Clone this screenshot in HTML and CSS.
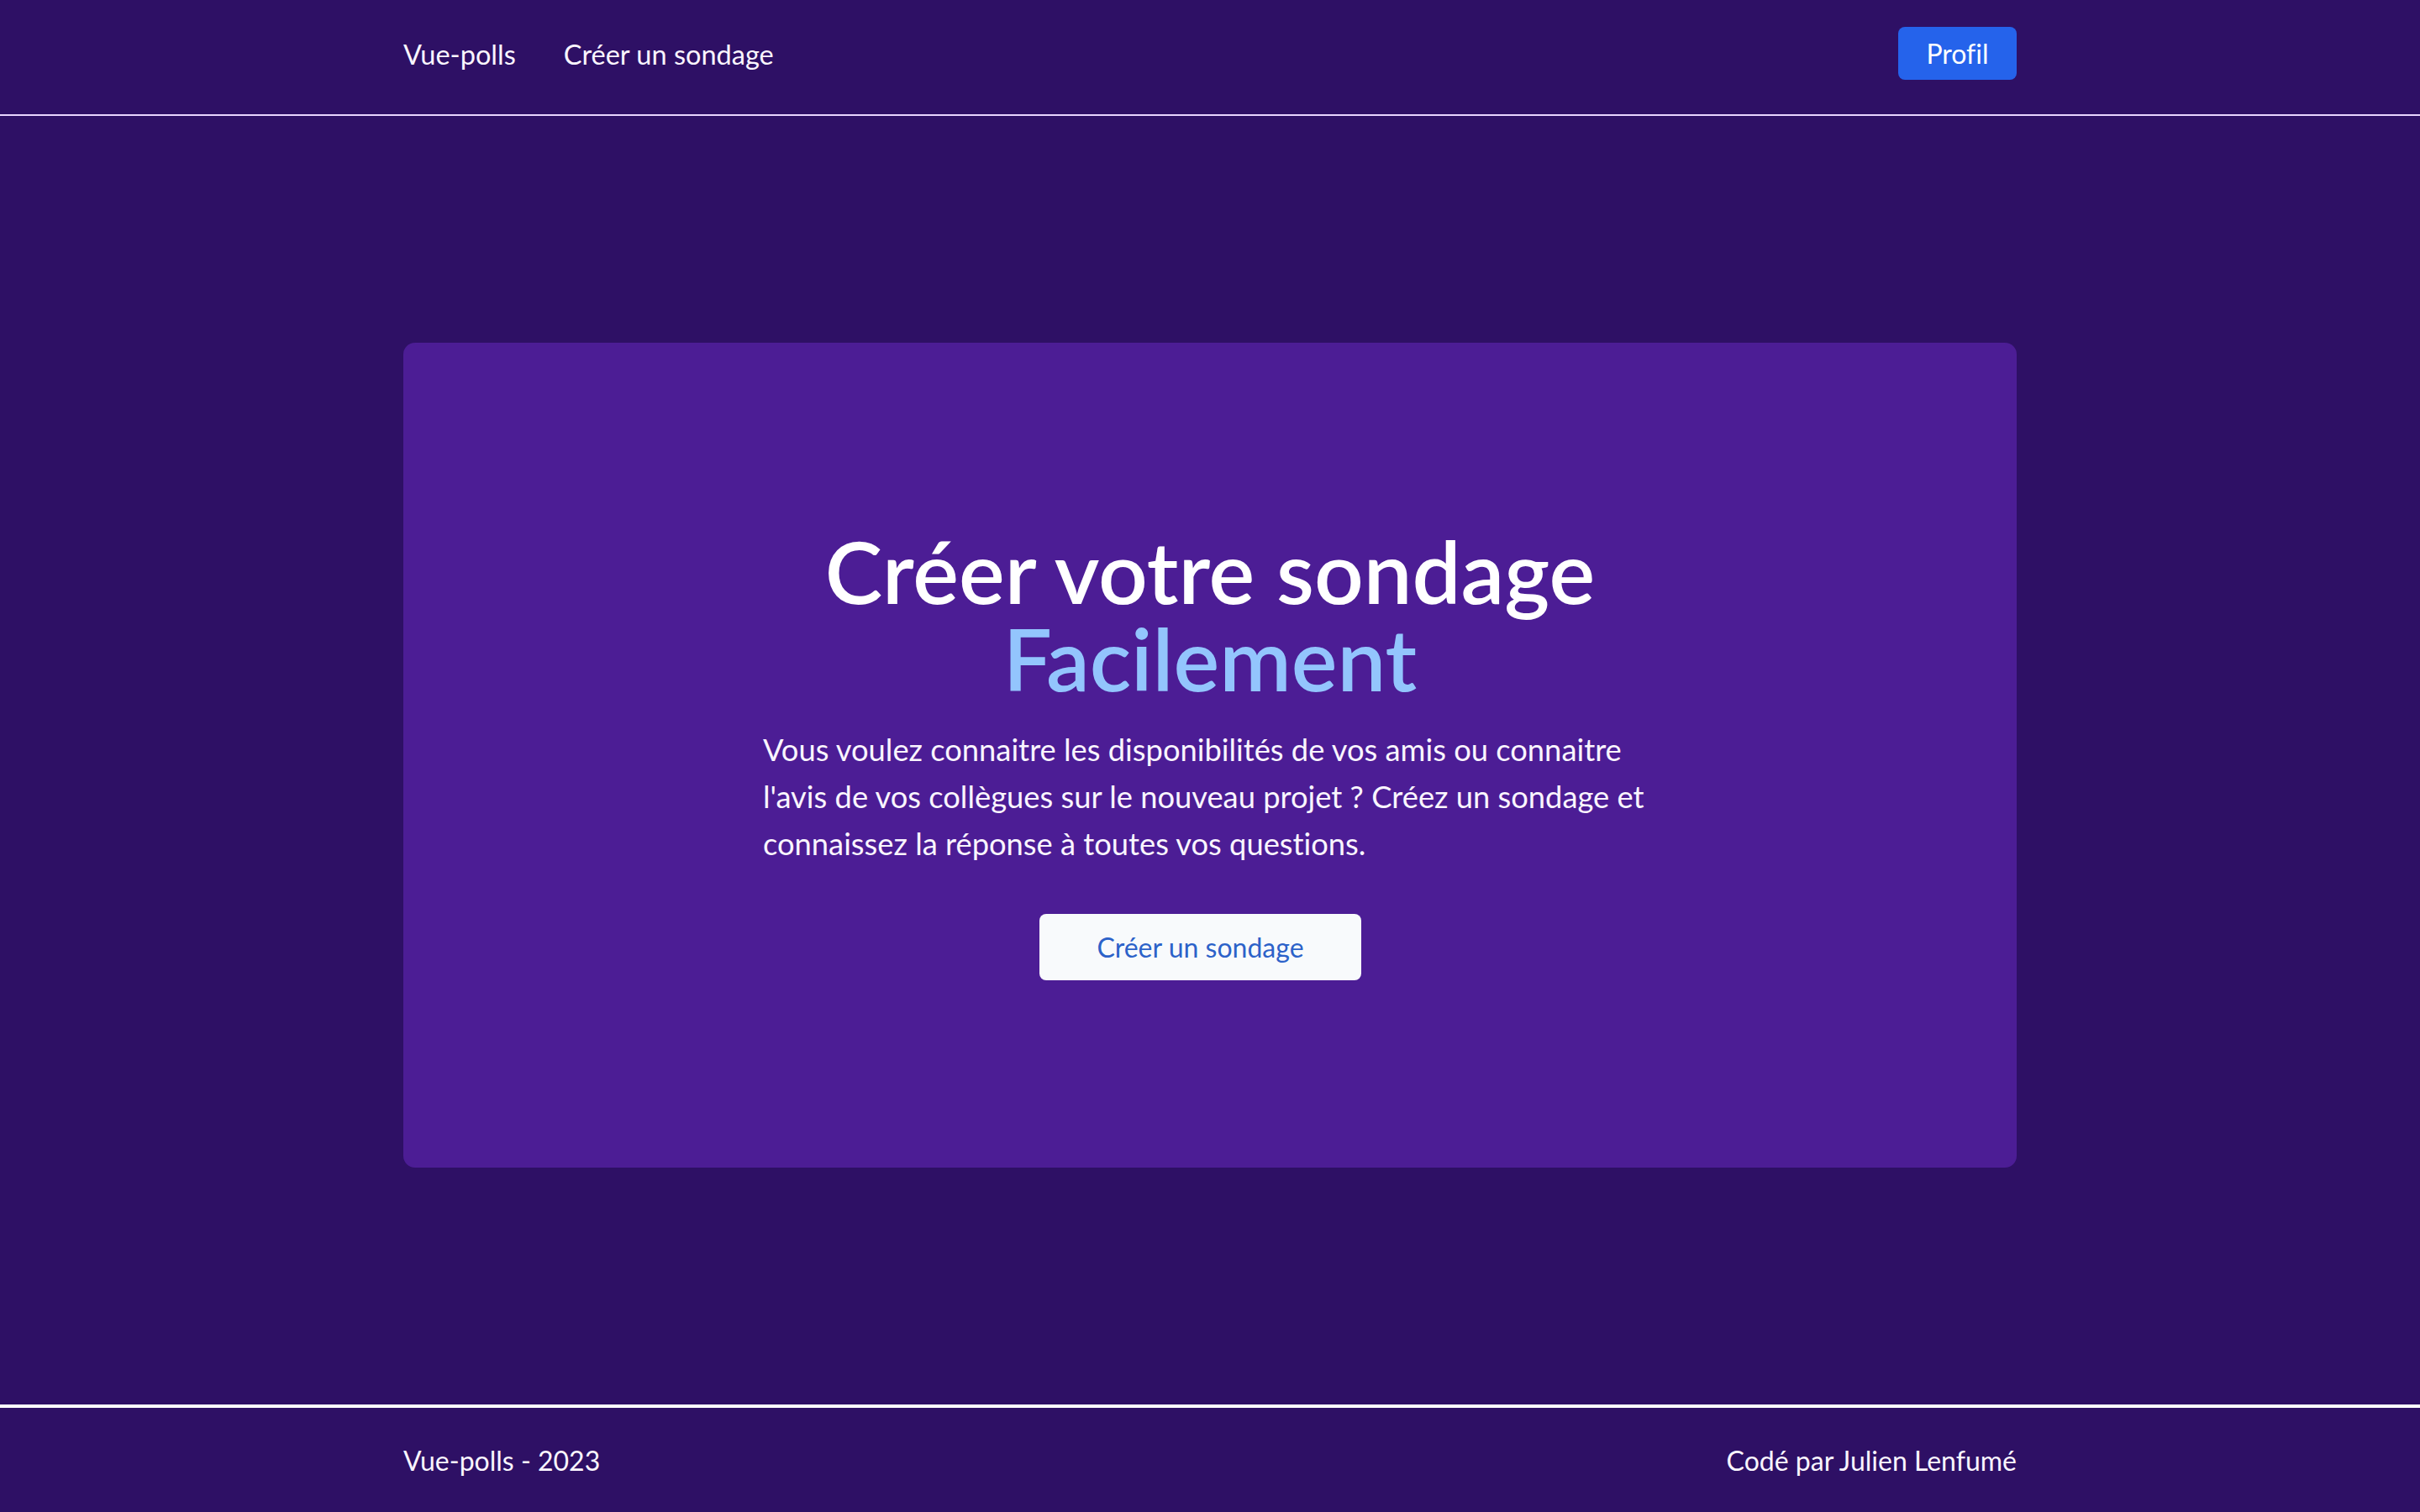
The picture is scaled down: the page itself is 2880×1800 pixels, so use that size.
FILE: index.html
```html
<!DOCTYPE html>
<html lang="fr">
<head>
<meta charset="utf-8">
<title>Vue-polls</title>
<link rel="stylesheet" href="styles.css">
</head>
<body>
<header class="site-header">
  <div class="container header-inner">
    <nav class="nav">
      <a class="nav-link" href="#">Vue-polls</a>
      <a class="nav-link" href="#">Créer un sondage</a>
    </nav>
    <a class="btn-profil" href="#">Profil</a>
  </div>
</header>
<main class="main">
  <div class="container">
    <section class="hero">
      <h1 class="hero-title">Créer votre sondage<br><span class="hero-accent">Facilement</span></h1>
      <p class="hero-text">Vous voulez connaitre les disponibilités de vos amis ou connaitre l'avis de vos collègues sur le nouveau projet ? Créez un sondage et connaissez la réponse à toutes vos questions.</p>
      <a class="btn-cta" href="#">Créer un sondage</a>
    </section>
  </div>
</main>
<footer class="site-footer">
  <div class="container footer-inner">
    <span>Vue-polls - 2023</span>
    <span>Codé par Julien Lenfumé</span>
  </div>
</footer>
</body>
</html>
```
FILE: styles.css
```css
* { box-sizing: border-box; }
html, body { margin: 0; padding: 0; }
body {
  min-height: 100vh;
  display: flex;
  flex-direction: column;
  background: #2e1065;
  color: #faf5ff;
  font-family: "Lato", "Open Sans", sans-serif;
  font-weight: 400;
  font-size: 32px;
  font-variant-ligatures: none;
}
a { text-decoration: none; color: inherit; }
.container {
  width: 1920px;
  margin: 0 auto;
}
.site-header {
  height: 138px;
  border-bottom: 2px solid #e9d5ff;
  padding-bottom: 7px;
}
.header-inner {
  height: 100%;
  display: flex;
  align-items: center;
  justify-content: space-between;
}
.nav {
  display: flex;
  gap: 57px;
  font-size: 32.5px;
}
.nav-link { color: #faf5ff; }
.btn-profil {
  display: inline-flex;
  align-items: center;
  justify-content: center;
  width: 141px;
  height: 63px;
  margin-top: -2px;
  background: #2563eb;
  color: #ffffff;
  border-radius: 8px;
}
.main {
  flex: 1;
  padding-top: 270px;
}
.hero {
  background: #4c1d95;
  border-radius: 14px;
  height: 982px;
  padding-top: 219px;
  display: flex;
  flex-direction: column;
  align-items: center;
}
.hero-title {
  margin: 0;
  font-weight: 600;
  font-size: 103px;
  line-height: 104px;
  text-align: center;
  color: #ffffff;
}
.hero-accent { color: #93c5fd; }
.hero-text {
  width: 1064px;
  margin: 29px 0 0;
  font-size: 36.3px;
  line-height: 56px;
}
.btn-cta {
  margin-top: 56px;
  margin-right: 23px;
  display: inline-flex;
  align-items: center;
  justify-content: center;
  width: 383px;
  height: 79px;
  background: #f8fafc;
  color: #2c62c9;
  border-radius: 8px;
}
.site-footer {
  border-top: 4px solid #ffffff;
  height: 128px;
}
.footer-inner {
  height: 100%;
  display: flex;
  align-items: center;
  justify-content: space-between;
}
```
